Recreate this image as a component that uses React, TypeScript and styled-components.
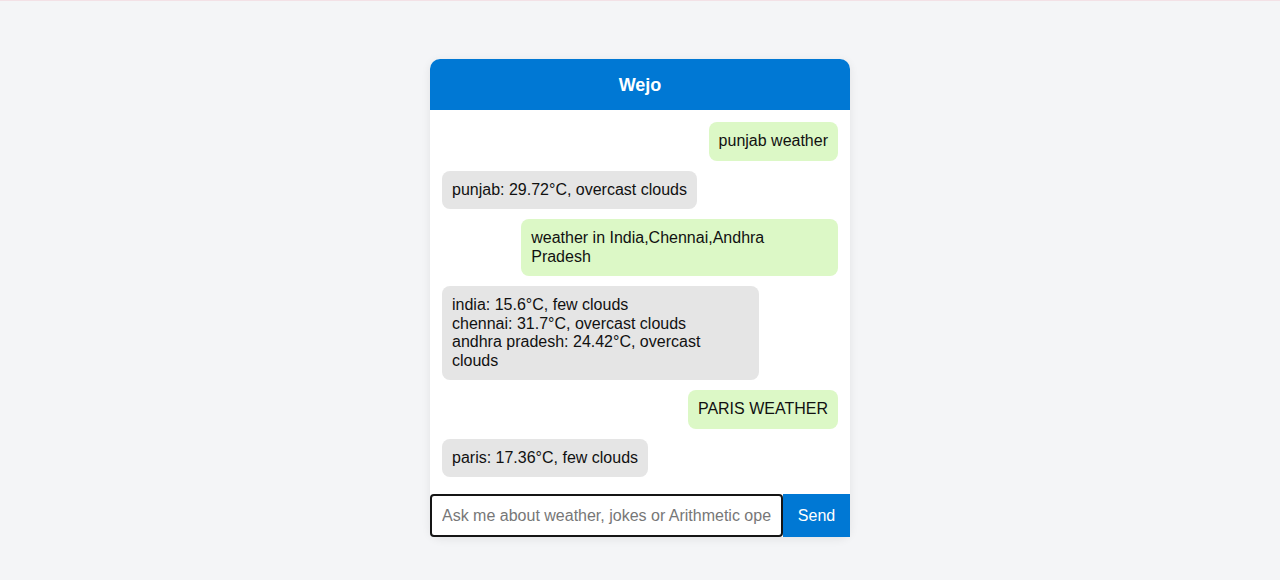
import React from "react";
import styled, { createGlobalStyle } from "styled-components";

const Global = createGlobalStyle`
  html, body { margin: 0; padding: 0; background: #f4f5f7; }
  body { font-family: "Liberation Sans", Arial, sans-serif; border-top: 1px solid #f3e1e6; }
  * { box-sizing: border-box; }
`;

const Page = styled.div`
  display: flex;
  justify-content: center;
  padding-top: 58px;
  height: 579px;
`;

const Card = styled.div`
  width: 420px;
  height: 478px;
  display: flex;
  flex-direction: column;
  background: #ffffff;
  border-radius: 10px;
  box-shadow: 0 2px 10px rgba(0, 0, 0, 0.08);
`;

const Header = styled.div`
  height: 51px;
  flex-shrink: 0;
  background: #0078d4;
  color: #ffffff;
  border-radius: 10px 10px 0 0;
  display: flex;
  align-items: center;
  justify-content: center;
  font-weight: bold;
  font-size: 18px;
  padding-top: 1px;
`;

const Messages = styled.div`
  height: 384px;
  flex-shrink: 0;
  padding: 12px;
  display: flex;
  flex-direction: column;
  gap: 10px;
  overflow: hidden;
`;

const Bubble = styled.div<{ $user?: boolean }>`
  align-self: ${(p) => (p.$user ? "flex-end" : "flex-start")};
  max-width: 80%;
  padding: 10px;
  border-radius: 8px;
  font-size: 16px;
  line-height: 18.5px;
  color: #111;
  white-space: pre-line;
  background: ${(p) => (p.$user ? "#dcf8c6" : "#e5e5e5")};
`;

const InputRow = styled.div`
  display: flex;
  height: 43px;
  flex-shrink: 0;
`;

const Input = styled.input`
  flex: 1;
  min-width: 0;
  height: 43px;
  border: 2px solid #151515;
  border-radius: 4px;
  padding: 0 10px;
  font-family: "Liberation Sans", Arial, sans-serif;
  font-size: 16px;
  outline: none;
  color: #111;
  &::placeholder { color: #777; }
`;

const SendButton = styled.button`
  width: 67px;
  height: 43px;
  border: none;
  background: #0078d4;
  color: #ffffff;
  font-family: "Liberation Sans", Arial, sans-serif;
  font-size: 16px;
  cursor: pointer;
`;

const messages: { user: boolean; text: string }[] = [
  { user: true, text: "punjab weather" },
  { user: false, text: "punjab: 29.72°C, overcast clouds" },
  { user: true, text: "weather in India,Chennai,Andhra Pradesh" },
  {
    user: false,
    text: "india: 15.6°C, few clouds\nchennai: 31.7°C, overcast clouds\nandhra pradesh: 24.42°C, overcast clouds",
  },
  { user: true, text: "PARIS WEATHER" },
  { user: false, text: "paris: 17.36°C, few clouds" },
];

export default function App() {
  return (
    <>
      <Global />
      <Page>
        <Card>
          <Header>Wejo</Header>
          <Messages>
            {messages.map((m, i) => (
              <Bubble key={i} $user={m.user}>
                {m.text}
              </Bubble>
            ))}
          </Messages>
          <InputRow>
            <Input autoFocus placeholder="Ask me about weather, jokes or Arithmetic operations" />
            <SendButton>Send</SendButton>
          </InputRow>
        </Card>
      </Page>
    </>
  );
}
